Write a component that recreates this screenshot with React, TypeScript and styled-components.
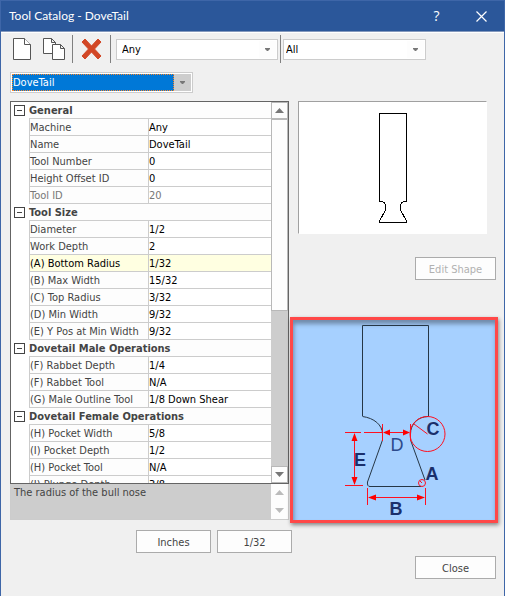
import React from "react";
import styled, { createGlobalStyle } from "styled-components";

const GlobalStyle = createGlobalStyle`
  *, *::before, *::after { box-sizing: border-box; }
  body {
    margin: 0;
    background: #f0f0f0;
    color: #444444;
    font: 11px/18px "DejaVu Sans Condensed", "DejaVu Sans", Tahoma, sans-serif;
  }
  button, select { font: inherit; color: inherit; }
`;

const Dialog = styled.main`
  display: flex;
  flex-direction: column;
  min-height: 100vh;
  border: 1px solid #3e66a8;
  background: #f0f0f0;
`;

const TitleBar = styled.header`
  display: flex;
  align-items: center;
  height: 31px;
  padding: 0 0 0 8px;
  background: #2b579a;
  border-bottom: 1px solid #8499bd;
  box-shadow: 0 1px 0 #ffffff;
  color: #ffffff;
`;

const Title = styled.h1`
  flex: 1;
  margin: 0;
  font: 400 12px/16px Lato, "Open Sans", sans-serif;
`;

const CaptionButton = styled.button`
  display: grid;
  place-items: center;
  width: 45px;
  height: 30px;
  padding: 0;
  border: 0;
  background: transparent;
  color: #ffffff;
  font: 400 14px/16px "Open Sans", "Noto Sans", sans-serif;
`;

const Toolbar = styled.div`
  display: flex;
  align-items: center;
  height: 28px;
  margin: 3px 6px 0 9px;
`;

const ToolButton = styled.button`
  display: grid;
  place-items: center start;
  width: 30px;
  height: 28px;
  padding: 0 0 0 2px;
  border: 0;
  background: transparent;
`;

const Divider = styled.span<{ $space: number }>`
  width: 1px;
  height: 28px;
  margin: 0 ${(p) => p.$space}px 0 2px;
  background: #808080;
`;

const ComboFrame = styled.label<{ $width: number }>`
  display: grid;
  grid-template-columns: 1fr 17px;
  align-items: center;
  width: ${(p) => p.$width}px;
  height: 21px;
  padding: 1px;
  border: 1px solid #cccccc;
  background: #ffffff;
`;

const ComboSelect = styled.select<{ $inset: number; $active?: boolean }>`
  appearance: none;
  min-width: 0;
  height: 17px;
  padding: 0 0 0 ${(p) => p.$inset}px;
  border: ${(p) => (p.$active ? "1px dotted #ff8728" : "0")};
  border-radius: 0;
  outline: 0;
  background: ${(p) => (p.$active ? "#0078d7" : "#ffffff")};
  color: ${(p) => (p.$active ? "#ffffff" : "#000000")};
  line-height: 15px;
`;

const ComboArrow = styled.span<{ $active?: boolean }>`
  display: grid;
  place-items: center;
  height: 17px;
  background: ${(p) => (p.$active ? "#cdcdcd" : "#fdfdfd")};
`;

const TypeRow = styled.div`
  display: flex;
  padding: 9px 6px 8px 9px;
`;

const Content = styled.div`
  display: grid;
  grid-template-columns: 280fr 208fr;
  padding: 0 6px 0 9px;
`;

const PropertyPane = styled.section`
  min-width: 0;
  padding-right: 1px;
`;

const ListBox = styled.div`
  display: grid;
  grid-template-columns: 1fr 17px;
  height: 383px;
  border: 1px solid #646464;
  background: #ffffff;
  overflow: hidden;
`;

const ListViewport = styled.div`
  min-height: 0;
  overflow: hidden;
`;

const PropertyTable = styled.table`
  width: 100%;
  table-layout: fixed;
  border-collapse: separate;
  border-spacing: 0;
  line-height: 14px;
`;

const GutterCol = styled.col`
  width: 18px;
`;

const NameCol = styled.col`
  width: 119px;
`;

const Gutter = styled.td`
  height: 17px;
  padding: 0 0 0 3px;
  line-height: 0;
`;

const GroupHeading = styled.th`
  height: 17px;
  padding: 2px 0 0 0;
  border-bottom: 1px solid #cccccc;
  background: #fdfdfd;
  font-weight: 700;
  text-align: left;
`;

const NameCell = styled.th<{ $selected?: boolean; $dim?: boolean }>`
  height: 17px;
  padding: 2px 0 0 0;
  border-left: 1px solid #cccccc;
  border-bottom: 1px solid #cccccc;
  background: ${(p) => (p.$selected ? "#ffffe1" : "#fdfdfd")};
  color: ${(p) => (p.$selected ? "#000000" : p.$dim ? "#777777" : "#444444")};
  font-weight: 400;
  text-align: left;
  white-space: nowrap;
`;

const ValueCell = styled.td<{ $selected?: boolean; $dim?: boolean }>`
  height: 17px;
  padding: 2px 0 0 0;
  border-left: 1px solid #cccccc;
  border-bottom: 1px solid #cccccc;
  background: ${(p) => (p.$selected ? "#ffffe1" : "#ffffff")};
  color: ${(p) => (p.$dim ? "#777777" : "#000000")};
  white-space: nowrap;
`;

const Toggle = styled.button`
  display: grid;
  place-items: center;
  width: 11px;
  height: 11px;
  padding: 0;
  border: 1px solid #444444;
  background: #ffffff;
`;

const ScrollTrack = styled.div`
  display: grid;
  grid-template-rows: 17px 192px 1fr 17px;
  background: #cdcdcd;
`;

const ScrollButton = styled.button<{ $flat?: boolean }>`
  display: grid;
  place-items: center;
  width: 17px;
  height: 17px;
  padding: 0;
  border: 1px solid ${(p) => (p.$flat ? "#fdfdfd" : "#b8b8b8")};
  background: #fdfdfd;
`;

const ScrollThumb = styled.div`
  border: 1px solid #b8b8b8;
  background: #fdfdfd;
`;

const Description = styled.div`
  display: grid;
  grid-template-columns: 1fr 17px;
  height: 36px;
  border: 1px solid #cccccc;
  border-top: 0;
  background: #cdcdcd;
`;

const DescriptionText = styled.p`
  margin: 0;
  padding: 0 3px;
`;

const DescriptionScroll = styled.div`
  display: flex;
  flex-direction: column;
  justify-content: space-between;
  background: #fdfdfd;
`;

const ShapePane = styled.section`
  display: flex;
  flex-direction: column;
  min-width: 0;
`;

const Preview = styled.div`
  height: 133px;
  margin: 0 11px 0 8px;
  border: 1px solid #ffffff;
  border-top-color: #a0a0a0;
  border-left-color: #a0a0a0;
  background: #ffffff;
`;

const Drawing = styled.svg`
  display: block;
  width: 100%;
  height: 100%;
`;

const Button = styled.button<{ $width: number }>`
  width: ${(p) => p.$width}px;
  height: 23px;
  padding: 2px 0 0 0;
  border: 1px solid #ababab;
  background: #fdfdfd;
  line-height: 16px;

  &:disabled { color: #b1b1b1; }
`;

const EditRow = styled.div`
  display: flex;
  justify-content: flex-end;
  padding: 23px 2px 37px 0;
`;

const Diagram = styled.figure`
  height: 206px;
  margin: 0;
  border: 3px solid #ff4848;
  background: #a6d0ff;
  box-shadow: 1px 2px 4px rgba(0, 0, 0, 0.45),
    inset 1px 4px 4px rgba(60, 70, 85, 0.5);
`;

const Letter = styled.text<{ $light?: boolean }>`
  fill: ${(p) => (p.$light ? "#2c4a8c" : "#1b2f6b")};
  font: ${(p) => (p.$light ? 400 : 700)} 18px "Liberation Sans", Arial, sans-serif;
  text-anchor: middle;
`;

const Footer = styled.footer`
  display: flex;
  justify-content: space-between;
  padding: 7px 8px 17px 9px;
`;

const UnitButtons = styled.div`
  display: flex;
  gap: 6px;
  padding-left: 126px;
`;

const CloseSlot = styled.div`
  padding-top: 26px;
`;

type Property = { name: string; value: string; dim?: boolean; selected?: boolean };
type Group = { title: string; items: Property[] };

const groups: Group[] = [
  {
    title: "General",
    items: [
      { name: "Machine", value: "Any" },
      { name: "Name", value: "DoveTail" },
      { name: "Tool Number", value: "0" },
      { name: "Height Offset ID", value: "0" },
      { name: "Tool ID", value: "20", dim: true },
    ],
  },
  {
    title: "Tool Size",
    items: [
      { name: "Diameter", value: "1/2" },
      { name: "Work Depth", value: "2" },
      { name: "(A) Bottom Radius", value: "1/32", selected: true },
      { name: "(B) Max Width", value: "15/32" },
      { name: "(C) Top Radius", value: "3/32" },
      { name: "(D) Min Width", value: "9/32" },
      { name: "(E) Y Pos at Min Width", value: "9/32" },
    ],
  },
  {
    title: "Dovetail Male Operations",
    items: [
      { name: "(F) Rabbet Depth", value: "1/4" },
      { name: "(F) Rabbet Tool", value: "N/A" },
      { name: "(G) Male Outline Tool", value: "1/8 Down Shear" },
    ],
  },
  {
    title: "Dovetail Female Operations",
    items: [
      { name: "(H) Pocket Width", value: "5/8" },
      { name: "(I) Pocket Depth", value: "1/2" },
      { name: "(H) Pocket Tool", value: "N/A" },
      { name: "(J) Plunge Depth", value: "3/8" },
    ],
  },
];

type ComboProps = { label: string; value: string; width: number; inset: number; active?: boolean };

function Combo({ label, value, width, inset, active }: ComboProps) {
  return (
    <ComboFrame $width={width}>
      <ComboSelect aria-label={label} $inset={inset} $active={active} defaultValue={value}>
        <option>{value}</option>
      </ComboSelect>
      <ComboArrow $active={active}>
        <svg width="5" height="3" viewBox="0 0 5 3" aria-hidden="true">
          <path d="M0 0h5v1L3 3H2L0 1z" fill="#777" />
        </svg>
      </ComboArrow>
    </ComboFrame>
  );
}

function Triangle({ down, color }: { down?: boolean; color: string }) {
  return (
    <svg width="9" height="5" viewBox="0 0 9 5" aria-hidden="true">
      <path d={down ? "M0 0h9L4.500 5z" : "M0 5h9L4.500 0z"} fill={color} />
    </svg>
  );
}

function NewIcon() {
  return (
    <svg width="20" height="24" viewBox="0 0 20 24" fill="#fff" stroke="#555" aria-hidden="true">
      <path d="M1.500 1.500h11l6 6v15h-17z" />
      <path d="M12.500 1.500v6h6" />
    </svg>
  );
}

function CopyIcon() {
  return (
    <svg width="24" height="24" viewBox="0 0 24 24" fill="#fff" stroke="#555" aria-hidden="true">
      <path d="M1.500 1.500h8l4 4v11h-12zM9.500 1.500v4h4" />
      <path d="M10.500 7.500h8l4 4v11h-12zM18.500 7.500v4h4" />
    </svg>
  );
}

function DeleteIcon() {
  return (
    <svg width="24" height="22" viewBox="0 0 24 22" aria-hidden="true">
      <path
        d="M2 4L5 1L11.500 8L18 1L21 4L14.500 11L21 18L18 21L11.500 14L5 21L2 18L8.500 11z"
        fill="#d24726"
        stroke="#d24726"
        strokeLinejoin="round"
      />
    </svg>
  );
}

function ToolPreview() {
  return (
    <Drawing viewBox="299 102 187 131" fill="none" stroke="#000" role="img" aria-label="Tool shape">
      <path
        shapeRendering="crispEdges"
        d="M379.500 113.500H406.500V201.500H403.500Q400.500 203 400.500 207V210L406.500 221V222.500H379.500V221L385.500 210V207Q385.500 203 382.500 201.500H379.500z"
      />
    </Drawing>
  );
}

function DimensionDiagram() {
  return (
    <Drawing viewBox="293 320 202 200" fill="none" role="img" aria-label="Dovetail dimensions">
      <g stroke="#263746">
        <path d="M362.500 416V325.500H428.500V416" />
        <path d="M362.500 416.500C374 418 382.500 425 382.500 434V440L367.500 482Q367 486.500 370 486.500H421" />
        <path d="M428.500 416.500C418 416.500 410.500 424 410.500 434V440L425 480" />
      </g>
      <g stroke="#ff1020">
        <circle cx="427.500" cy="434" r="17.500" />
        <circle cx="422" cy="483" r="3.500" />
        <path d="M414 424L427.500 434M420 481L422 483" />
        <path d="M382.500 424V441M410.500 424V441M384 432.500H409" />
        <path d="M345 432.500H361M364 432.500H382M354.500 434V484M345 485.500H363" />
        <path d="M367.500 488V505M425.500 488V505M369 497.500H424" />
      </g>
      <g fill="#ff0000">
        <path d="M383 432.500l7-3v6zM410 432.500l-7-3v6z" />
        <path d="M354.500 433l-3 8h6zM354.500 485l-3-8h6z" />
        <path d="M368 497.500l8-3v6zM425 497.500l-8-3v6z" />
      </g>
      <Letter x="433" y="435">C</Letter>
      <Letter x="397" y="451" $light>D</Letter>
      <Letter x="360" y="466">E</Letter>
      <Letter x="432" y="480">A</Letter>
      <Letter x="396" y="515">B</Letter>
    </Drawing>
  );
}

export default function App() {
  return (
    <>
      <GlobalStyle />
      <Dialog>
        <TitleBar>
          <Title>Tool Catalog - DoveTail</Title>
          <CaptionButton aria-label="Help">?</CaptionButton>
          <CaptionButton aria-label="Close window">
            <svg width="11" height="11" viewBox="0 0 11 11" aria-hidden="true">
              <path d="M.5.5l10 10M10.500.5l-10 10" stroke="#fff" strokeWidth="1.200" />
            </svg>
          </CaptionButton>
        </TitleBar>

        <Toolbar>
          <ToolButton aria-label="New tool"><NewIcon /></ToolButton>
          <ToolButton aria-label="Copy tool"><CopyIcon /></ToolButton>
          <Divider $space={5} />
          <ToolButton aria-label="Delete tool"><DeleteIcon /></ToolButton>
          <Divider $space={5} />
          <Combo label="Machine" value="Any" width={162} inset={4} />
          <Divider $space={2} />
          <Combo label="Category" value="All" width={143} inset={1} />
        </Toolbar>

        <TypeRow>
          <Combo label="Tool type" value="DoveTail" width={183} inset={0} active />
        </TypeRow>

        <Content>
          <PropertyPane>
            <ListBox>
              <ListViewport>
                <PropertyTable aria-label="Tool properties">
                  <colgroup>
                    <GutterCol />
                    <NameCol />
                    <col />
                  </colgroup>
                  {groups.map((group) => (
                    <tbody key={group.title}>
                      <tr>
                        <Gutter>
                          <Toggle aria-label={`Collapse ${group.title}`}>
                            <svg width="5" height="1" viewBox="0 0 5 1" aria-hidden="true">
                              <path d="M0 0h5v1H0z" fill="#444" />
                            </svg>
                          </Toggle>
                        </Gutter>
                        <GroupHeading colSpan={2} scope="colgroup">{group.title}</GroupHeading>
                      </tr>
                      {group.items.map((item) => (
                        <tr key={item.name}>
                          <Gutter />
                          <NameCell scope="row" $selected={item.selected} $dim={item.dim}>
                            {item.name}
                          </NameCell>
                          <ValueCell $selected={item.selected} $dim={item.dim}>
                            {item.value}
                          </ValueCell>
                        </tr>
                      ))}
                    </tbody>
                  ))}
                </PropertyTable>
              </ListViewport>
              <ScrollTrack>
                <ScrollButton aria-label="Scroll up"><Triangle color="#777" /></ScrollButton>
                <ScrollThumb />
                <span />
                <ScrollButton aria-label="Scroll down"><Triangle down color="#777" /></ScrollButton>
              </ScrollTrack>
            </ListBox>
            <Description>
              <DescriptionText>The radius of the bull nose</DescriptionText>
              <DescriptionScroll>
                <ScrollButton $flat disabled aria-label="Scroll description up">
                  <Triangle color="#bbb" />
                </ScrollButton>
                <ScrollButton $flat disabled aria-label="Scroll description down">
                  <Triangle down color="#bbb" />
                </ScrollButton>
              </DescriptionScroll>
            </Description>
          </PropertyPane>

          <ShapePane>
            <Preview><ToolPreview /></Preview>
            <EditRow>
              <Button $width={81} disabled>Edit Shape</Button>
            </EditRow>
            <Diagram><DimensionDiagram /></Diagram>
          </ShapePane>
        </Content>

        <Footer>
          <UnitButtons>
            <Button $width={75}>Inches</Button>
            <Button $width={75}>1/32</Button>
          </UnitButtons>
          <CloseSlot>
            <Button $width={81}>Close</Button>
          </CloseSlot>
        </Footer>
      </Dialog>
    </>
  );
}
